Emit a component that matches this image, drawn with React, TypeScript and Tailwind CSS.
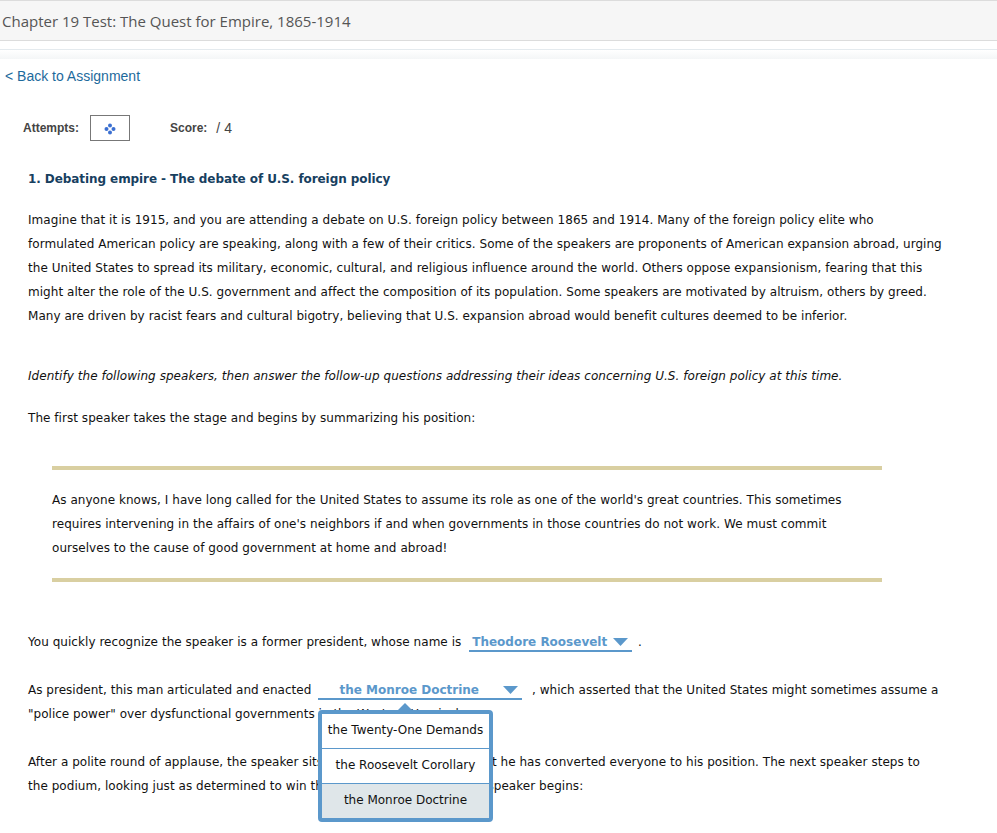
const body = "font-['DejaVu_Sans',Verdana,sans-serif] text-[12px] leading-[24px] tracking-[0.045px] text-[#111]";

const Dropdown = ({ label, widthClass, marginClass }: { label: string; widthClass: string; marginClass: string }) => (
  <span className={`inline-flex h-[18px] items-center border-b-2 border-[#5b98cb] pr-[4px] pl-[3px] align-middle ${widthClass} ${marginClass}`}>
    <span className="flex-1 whitespace-nowrap text-center font-bold tracking-normal text-[#5b98cb]">{label}</span>
    <svg width="15" height="8" viewBox="0 0 15 8" className="ml-[6px] shrink-0">
      <path d="M0 0h15L7.5 8z" fill="#5b98cb" />
    </svg>
  </span>
);

const App = () => {
  return (
    <div className="h-[833px] w-[997px] overflow-hidden bg-white">
      <div className="flex h-[41px] items-center border-y border-[#dcdcdc] bg-[#f6f6f6] pt-[1px] pl-[2px] font-['Open_Sans',sans-serif] text-[15px] text-[#555]">
        Chapter 19 Test: The Quest for Empire, 1865-1914
      </div>
      <div className="mt-[8px] h-[10px] border-t border-[#e4eaee] bg-gradient-to-b from-white to-[#f4f6f7]" />
      <div className="pt-[7px] pl-[5px] font-['Liberation_Sans',sans-serif] text-[14px] leading-[20px] text-[#1d6a9c]">
        &lt; Back to Assignment
      </div>
      <div className="mt-[29px] ml-[23px] flex items-center font-['Liberation_Sans',sans-serif] text-[12px] text-[#444]">
        <span className="font-bold">Attempts:</span>
        <div className="ml-[11px] flex h-[26px] w-[40px] items-center justify-center border border-[#777]">
          <svg width="12" height="12" viewBox="0 0 12 12" fill="#3b6fd1" className="mt-[1px]">
            <circle cx="6" cy="2.5" r="2" />
            <circle cx="2.5" cy="6" r="2" />
            <circle cx="9.5" cy="6" r="2" />
            <circle cx="6" cy="9.5" r="2" />
          </svg>
        </div>
        <span className="ml-[40px] font-bold">Score:</span>
        <span className="ml-[9px] text-[14px]">/ 4</span>
      </div>

      <div className={`mt-[26px] pr-[54px] pl-[28px] ${body}`}>
        <h2 className="font-bold tracking-[-0.08px] text-[#17405f]">1. Debating empire - The debate of U.S. foreign policy</h2>
        <p className="mt-[17px]">
          Imagine that it is 1915, and you are attending a debate on U.S. foreign policy between 1865 and 1914. Many of the foreign policy elite who formulated American policy are speaking, along with a few of their critics. Some of the speakers are proponents of American expansion abroad, urging the United States to spread its military, economic, cultural, and religious influence around the world. Others oppose expansionism, fearing that this might alter the role of the U.S. government and affect the composition of its population. Some speakers are motivated by altruism, others by greed. Many are driven by racist fears and cultural bigotry, believing that U.S. expansion abroad would benefit cultures deemed to be inferior.
        </p>
        <p className="mt-[36px] italic">
          Identify the following speakers, then answer the follow-up questions addressing their ideas concerning U.S. foreign policy at this time.
        </p>
        <p className="mt-[18px]">The first speaker takes the stage and begins by summarizing his position:</p>
        <blockquote className="mt-[36px] ml-[24px] w-[830px] border-y-4 border-[#d9cfa1] pt-[18px] pb-[18px]">
          As anyone knows, I have long called for the United States to assume its role as one of the world's great countries. This sometimes requires intervening in the affairs of one's neighbors if and when governments in those countries do not work. We must commit ourselves to the cause of good government at home and abroad!
        </blockquote>
        <p className="mt-[48px]">
          You quickly recognize the speaker is a former president, whose name is{" "}
          <Dropdown label="Theodore Roosevelt" widthClass="w-[163px]" marginClass="mr-[2px] ml-[4px]" /> .
        </p>
        <div className="relative mt-[24px]">
          <p className="tracking-[0.02px]">
            As president, this man articulated and enacted{" "}
            <Dropdown label="the Monroe Doctrine" widthClass="w-[204px]" marginClass="mr-[6px] ml-[3px]" /> , which asserted that the United States might sometimes assume a "police power" over dysfunctional governments in the Western Hemisphere.
          </p>
          <p className="mt-[24px]">
            After a polite round of applause, the speaker sits down, clearly confident that he has converted everyone to his position. The next speaker steps to the podium, looking just as determined to win the crowds over. The second speaker begins:
          </p>
          <div className="absolute top-[32px] left-[290px] w-[175px] rounded-[4px] border-4 border-[#5b98cb] bg-white text-center tracking-normal text-[#111]">
            <div className="absolute -top-[11px] left-[76px] h-0 w-0 border-x-[7px] border-b-[7px] border-x-transparent border-b-[#5b98cb]" />
            <div className="h-[35px] border-b border-[#5b98cb] leading-[33px]">the Twenty-One Demands</div>
            <div className="h-[35px] border-b border-[#5b98cb] leading-[33px]">the Roosevelt Corollary</div>
            <div className="h-[34px] bg-[#dfe6e9] leading-[33px]">the Monroe Doctrine</div>
          </div>
        </div>
      </div>
    </div>
  );
};

export default App;
